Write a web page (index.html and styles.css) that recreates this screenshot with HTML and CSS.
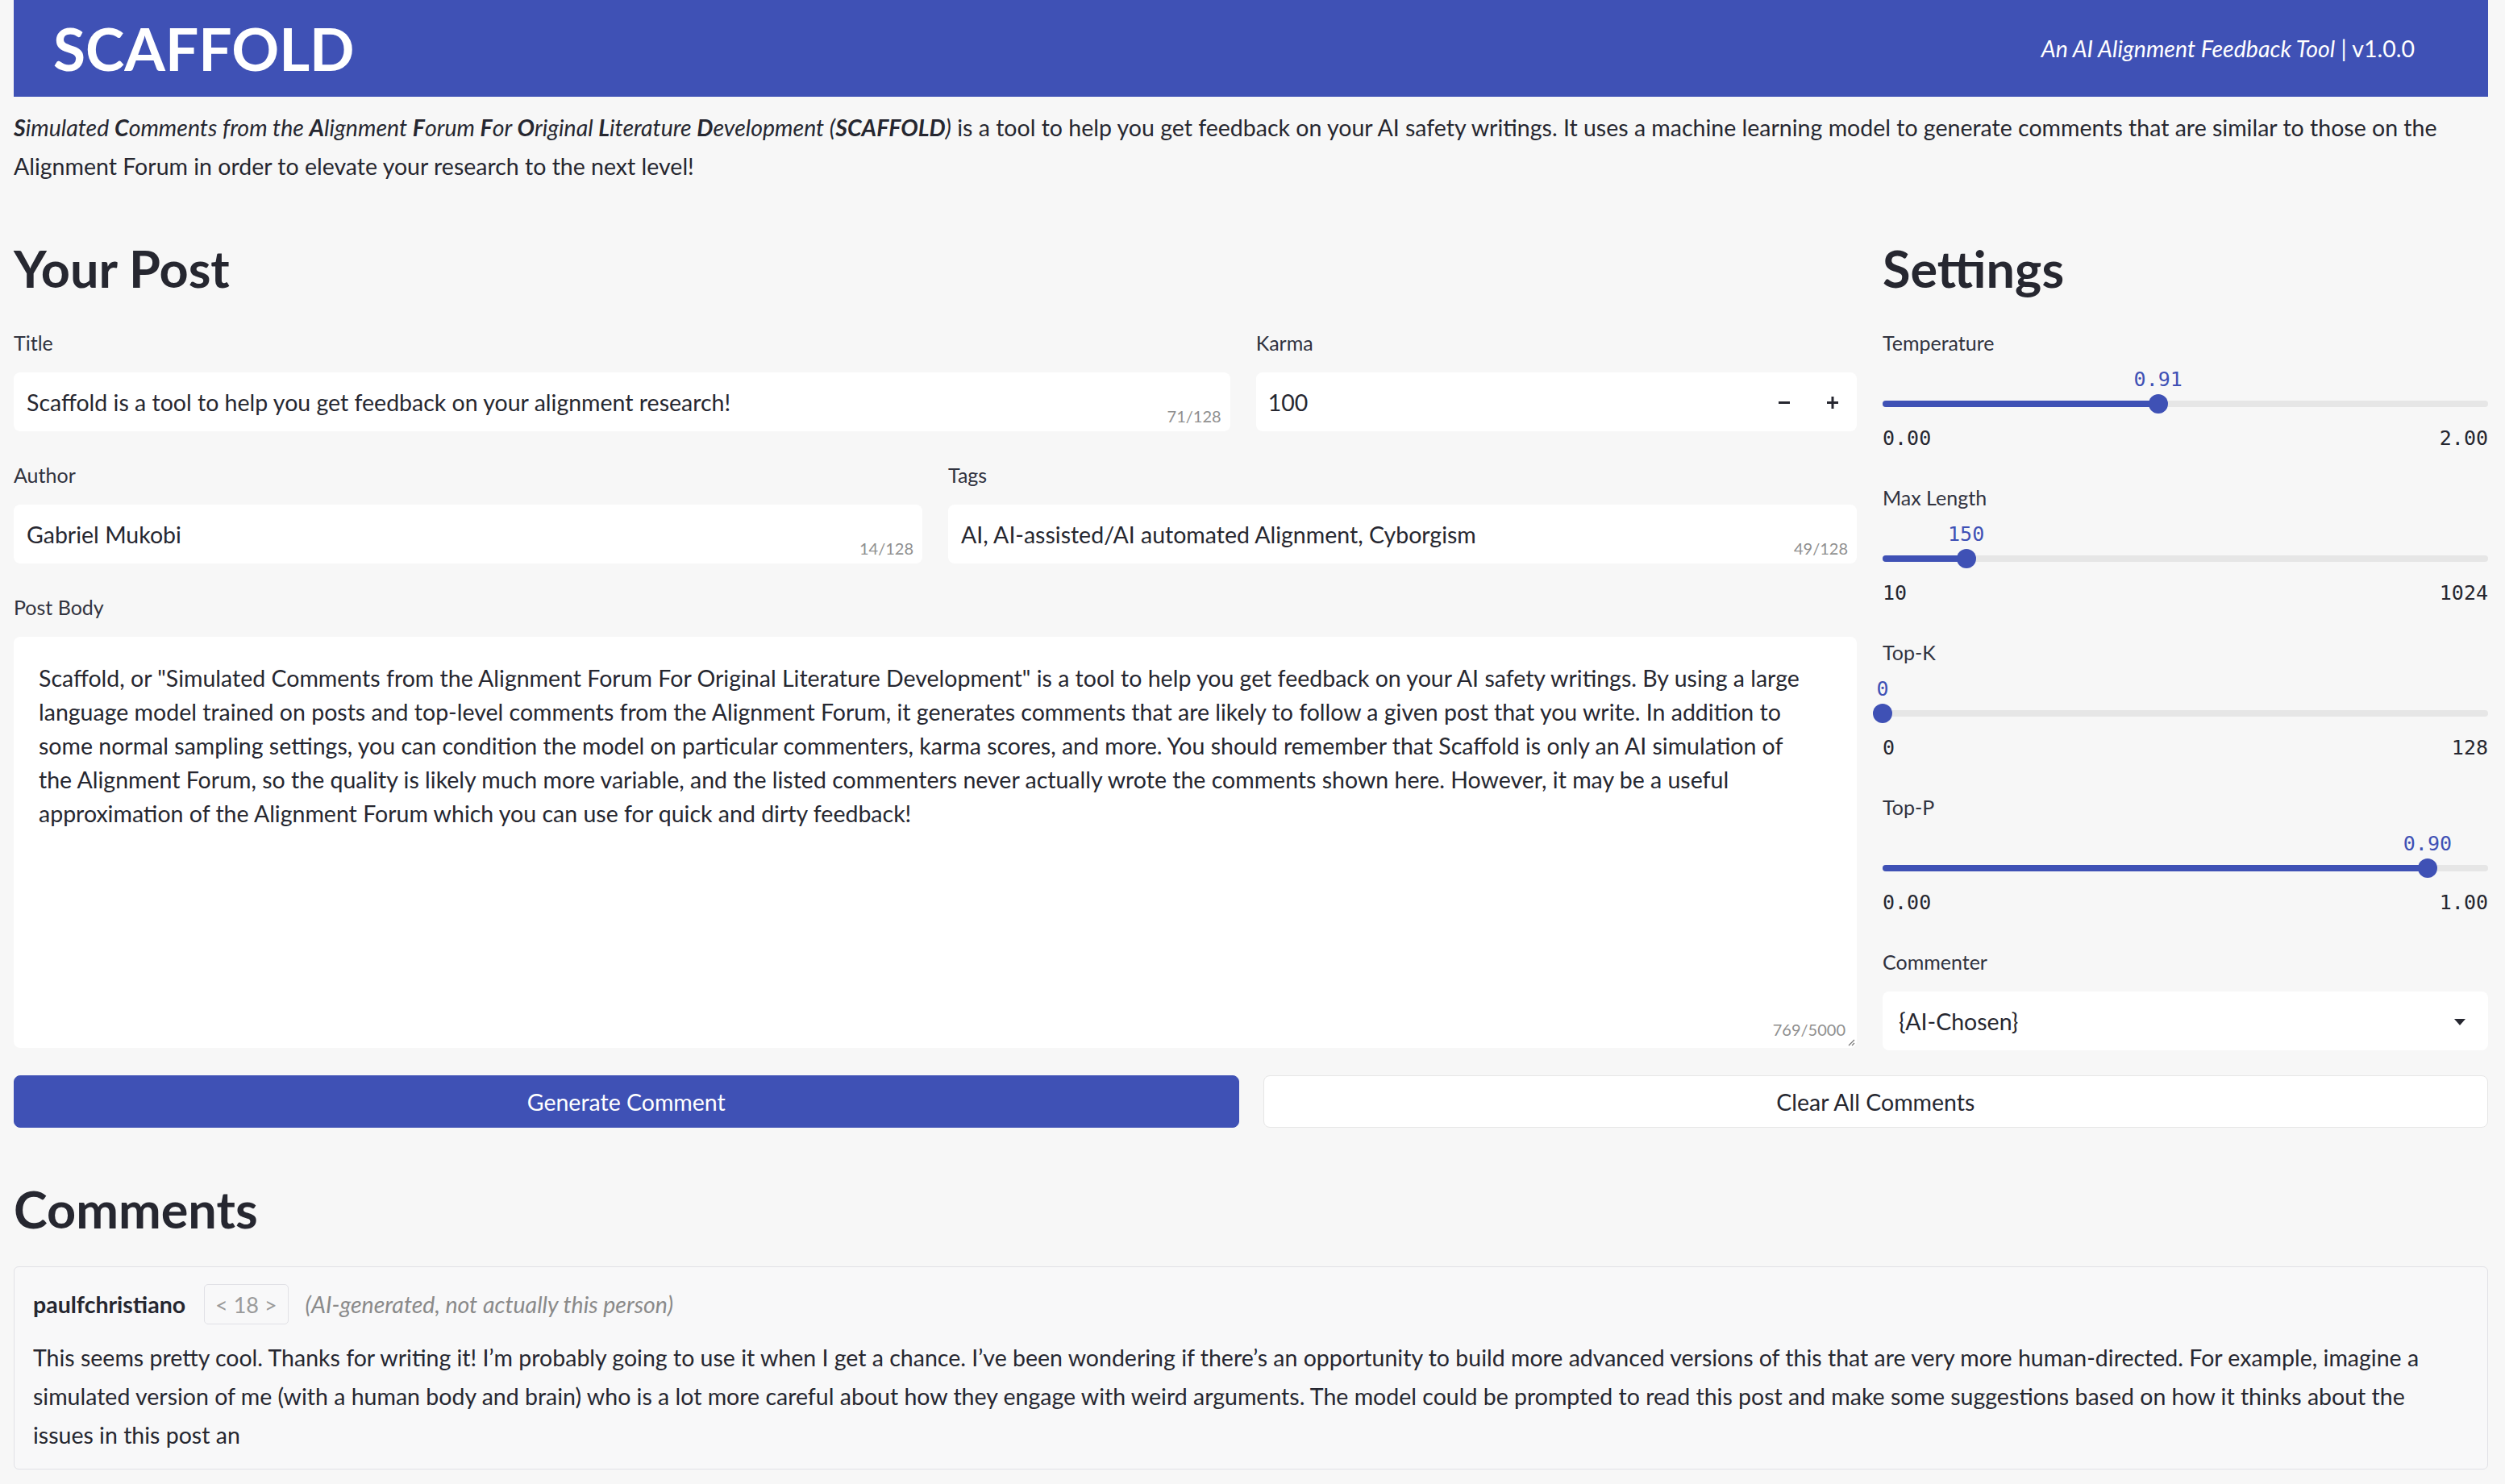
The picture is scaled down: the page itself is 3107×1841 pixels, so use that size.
FILE: index.html
```html
<!DOCTYPE html>
<html lang="en">
<head>
<meta charset="utf-8">
<title>SCAFFOLD</title>
<link rel="stylesheet" href="styles.css">
</head>
<body>
<div class="app">
  <header class="topbar">
    <h1 class="brand">SCAFFOLD</h1>
    <div class="tagline"><em>An AI Alignment Feedback Tool</em> | v1.0.0</div>
  </header>

  <p class="intro"><em><b>S</b>imulated <b>C</b>omments from the <b>A</b>lignment <b>F</b>orum <b>F</b>or <b>O</b>riginal <b>L</b>iterature <b>D</b>evelopment (<b>SCAFFOLD</b>)</em> is a tool to help you get feedback on your AI safety writings. It uses a machine learning model to generate comments that are similar to those on the Alignment Forum in order to elevate your research to the next level!</p>

  <div class="columns">
    <section class="post-col">
      <h2 class="heading">Your Post</h2>
      <div class="row row-title">
        <div class="field">
          <div class="label">Title</div>
          <div class="input">Scaffold is a tool to help you get feedback on your alignment research!<span class="count">71/128</span></div>
        </div>
        <div class="field">
          <div class="label">Karma</div>
          <div class="input number">100
            <span class="steppers">
              <span class="step"><svg width="16" height="16" viewBox="0 0 16 16"><rect x="1" y="7" width="14" height="3" fill="#262730"/></svg></span>
              <span class="step"><svg width="16" height="16" viewBox="0 0 16 16"><rect x="1" y="7" width="14" height="3" fill="#262730"/><rect x="6.5" y="1" width="3" height="15" fill="#262730"/></svg></span>
            </span>
          </div>
        </div>
      </div>
      <div class="row row-half">
        <div class="field">
          <div class="label">Author</div>
          <div class="input">Gabriel Mukobi<span class="count">14/128</span></div>
        </div>
        <div class="field">
          <div class="label">Tags</div>
          <div class="input">AI, AI-assisted/AI automated Alignment, Cyborgism<span class="count">49/128</span></div>
        </div>
      </div>
      <div class="field">
        <div class="label">Post Body</div>
        <div class="textarea">
          <span class="tl">Scaffold, or "Simulated Comments from the Alignment Forum For Original Literature Development" is a tool to help you get feedback on your AI safety writings. By using a large</span>
          <span class="tl">language model trained on posts and top-level comments from the Alignment Forum, it generates comments that are likely to follow a given post that you write. In addition to</span>
          <span class="tl">some normal sampling settings, you can condition the model on particular commenters, karma scores, and more. You should remember that Scaffold is only an AI simulation of</span>
          <span class="tl">the Alignment Forum, so the quality is likely much more variable, and the listed commenters never actually wrote the comments shown here. However, it may be a useful</span>
          <span class="tl">approximation of the Alignment Forum which you can use for quick and dirty feedback!</span>
          <span class="count ta-count">769/5000</span>
          <svg class="resize" width="10" height="10" viewBox="0 0 10 10"><path d="M9 2 L2 9 M9 6 L6 9" stroke="#777" stroke-width="1.2"/></svg>
        </div>
      </div>
    </section>

    <aside class="settings-col">
      <h2 class="heading">Settings</h2>
      <div class="slider">
        <div class="label">Temperature</div>
        <div class="s-value"><span style="left:45.5%">0.91</span></div>
        <div class="track"><div class="fill" style="width:45.5%"></div><div class="thumb" style="left:45.5%"></div></div>
        <div class="s-range"><span>0.00</span><span>2.00</span></div>
      </div>
      <div class="slider">
        <div class="label">Max Length</div>
        <div class="s-value"><span style="left:13.8%">150</span></div>
        <div class="track"><div class="fill" style="width:13.8%"></div><div class="thumb" style="left:13.8%"></div></div>
        <div class="s-range"><span>10</span><span>1024</span></div>
      </div>
      <div class="slider">
        <div class="label">Top-K</div>
        <div class="s-value"><span style="left:0%">0</span></div>
        <div class="track"><div class="fill" style="width:0%"></div><div class="thumb" style="left:0%"></div></div>
        <div class="s-range"><span>0</span><span>128</span></div>
      </div>
      <div class="slider">
        <div class="label">Top-P</div>
        <div class="s-value"><span style="left:90%">0.90</span></div>
        <div class="track"><div class="fill" style="width:90%"></div><div class="thumb" style="left:90%"></div></div>
        <div class="s-range"><span>0.00</span><span>1.00</span></div>
      </div>
      <div class="field select-field">
        <div class="label">Commenter</div>
        <div class="input select">{AI-Chosen}<svg class="caret" width="16" height="10" viewBox="0 0 16 10"><path d="M1 1 H15 L8 9 Z" fill="#262730"/></svg></div>
      </div>
    </aside>
  </div>

  <div class="buttons">
    <button class="btn primary">Generate Comment</button>
    <button class="btn secondary">Clear All Comments</button>
  </div>

  <h2 class="heading comments-heading">Comments</h2>
  <div class="comment">
    <div class="c-head">
      <span class="c-name">paulfchristiano</span>
      <span class="c-karma">&lt; 18 &gt;</span>
      <span class="c-note">(AI-generated, not actually this person)</span>
    </div>
    <p class="c-text">This seems pretty cool. Thanks for writing it! I’m probably going to use it when I get a chance. I’ve been wondering if there’s an opportunity to build more advanced versions of this that are very more human-directed. For example, imagine a simulated version of me (with a human body and brain) who is a lot more careful about how they engage with weird arguments. The model could be prompted to read this post and make some suggestions based on how it thinks about the issues in this post an</p>
  </div>
</div>
</body>
</html>
```

FILE: styles.css
```css
html, body {
  margin: 0;
  padding: 0;
}
body {
  background: #f7f7f7;
  font-family: Lato, "Noto Sans", sans-serif;
  color: #262730;
}
.app {
  padding: 0 21px 0 17px;
}

/* header */
.topbar {
  height: 120px;
  background: #3f51b5;
  color: #fff;
  display: flex;
  align-items: center;
  justify-content: space-between;
  padding: 0 91px 0 49px;
}
.brand {
  margin: 0;
  font-size: 73px;
  font-weight: 700;
  line-height: 1;
}
.tagline {
  font-size: 28.5px;
}

.intro {
  margin: 14px 0 0;
  font-size: 28.5px;
  line-height: 48px;
}

/* columns */
.columns {
  display: grid;
  grid-template-columns: minmax(0, 2286fr) minmax(0, 751fr);
  gap: 32px;
  margin-top: 63px;
}
.heading {
  margin: 0;
  font-size: 63px;
  font-weight: 700;
  line-height: 80px;
  color: #262730;
}
.label {
  font-size: 25px;
  line-height: 36px;
  height: 36px;
  color: #31333f;
}
.post-col > .heading + .row {
  margin-top: 34px;
}
.row {
  display: grid;
  gap: 32px;
}
.row-title {
  grid-template-columns: minmax(0, 1508fr) minmax(0, 745fr);
}
.row-half {
  grid-template-columns: 1fr 1fr;
  margin-top: 36px;
}
.post-col > .field {
  margin-top: 36px;
}
.field .label {
  margin-bottom: 19px;
}
.input {
  position: relative;
  height: 73px;
  background: #fff;
  border-radius: 8px;
  box-sizing: border-box;
  padding: 0 16px;
  display: flex;
  align-items: center;
  font-size: 28.5px;
  white-space: nowrap;
}
.count {
  position: absolute;
  right: 11px;
  bottom: 7px;
  font-size: 20px;
  color: #8f8f8f;
}
.number {
  padding-left: 15px;
}
.steppers {
  position: absolute;
  right: 0;
  top: 0;
  bottom: 0;
  display: flex;
}
.step {
  width: 60px;
  display: flex;
  align-items: center;
  justify-content: center;
}

.textarea {
  position: relative;
  height: 510px;
  background: #fff;
  border-radius: 8px;
  box-sizing: border-box;
  padding: 30px 31px;
  font-size: 28.5px;
  line-height: 42px;
}
.tl {
  display: block;
  white-space: nowrap;
}
.ta-count {
  right: 14px;
  bottom: 2px;
}
.resize {
  position: absolute;
  right: 2px;
  bottom: 2px;
}

/* settings */
.settings-col > .heading + .slider {
  margin-top: 34px;
}
.slider + .slider,
.slider + .field {
  margin-top: 37px;
}
.slider .label {
  margin-bottom: 10px;
}
.s-value {
  position: relative;
  height: 36px;
  font-family: "DejaVu Sans Mono", monospace;
  font-size: 25px;
  line-height: 36px;
  color: #3f51b5;
}
.s-value span {
  position: absolute;
  top: 0;
  transform: translateX(-50%);
}
.track {
  position: relative;
  height: 24px;
}
.track::before {
  content: "";
  position: absolute;
  left: 0;
  right: 0;
  top: 8px;
  height: 8px;
  border-radius: 4px;
  background: #e6e6e6;
}
.fill {
  position: absolute;
  left: 0;
  top: 8px;
  height: 8px;
  border-radius: 4px;
  background: #3f51b5;
}
.thumb {
  position: absolute;
  top: 0;
  width: 24px;
  height: 24px;
  border-radius: 50%;
  background: #3f51b5;
  transform: translateX(-50%);
}
.s-range {
  margin-top: 13px;
  height: 36px;
  display: flex;
  justify-content: space-between;
  font-family: "DejaVu Sans Mono", monospace;
  font-size: 25px;
  line-height: 36px;
  color: #262730;
}
.select {
  padding-left: 20px;
}
.caret {
  position: absolute;
  right: 27px;
  top: 33px;
}

/* buttons */
.buttons {
  display: grid;
  grid-template-columns: 1fr 1fr;
  gap: 30px;
  margin-top: 31px;
}
.btn {
  height: 65px;
  border-radius: 8px;
  font-family: inherit;
  font-size: 28.5px;
  cursor: pointer;
}
.primary {
  background: #3f51b5;
  color: #fff;
  border: 1px solid #3f51b5;
}
.secondary {
  background: #fff;
  color: #262730;
  border: 1px solid #e6e6e6;
}

/* comments */
.comments-heading {
  margin-top: 61px;
}
.comment {
  margin-top: 31px;
  background: #f8f8f9;
  border: 1px solid #e1e1e6;
  border-radius: 6px;
  padding: 21px 23px 18px;
}
.c-head {
  display: flex;
  align-items: center;
  height: 50px;
  font-size: 28.5px;
}
.c-name {
  font-weight: 700;
}
.c-karma {
  margin-left: 23px;
  height: 50px;
  box-sizing: border-box;
  border: 1px solid #e1e1e6;
  border-radius: 5px;
  padding: 0 13px;
  display: flex;
  align-items: center;
  color: #9a9a9a;
  font-size: 27px;
}
.c-note {
  margin-left: 21px;
  font-style: italic;
  color: #8a8a8a;
}
.c-text {
  margin: 17px 0 0;
  font-size: 28.5px;
  line-height: 48px;
}
```
